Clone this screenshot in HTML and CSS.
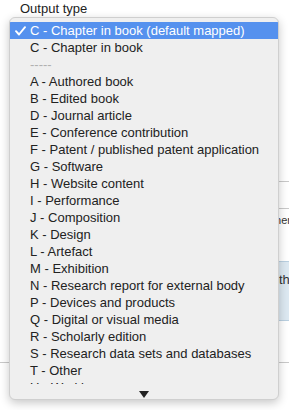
FILE: index.html
```html
<!DOCTYPE html>
<html>
<head>
<meta charset="utf-8">
<link rel="stylesheet" href="styles.css">
</head>
<body>
<div class="page">
  <div class="field-label">Output type</div>
  <div class="form">
    <div class="form-row first"></div>
    <div class="form-row second"></div>
    <div class="note-text">them</div>
    <div class="info-box"><span class="info-text">the</span></div>
    <div class="form-row last"></div>
  </div>

  <div class="menu">
    <ul class="options">
      <li class="option selected"><svg class="check" width="11" height="10" viewBox="0 0 11 10"><path d="M1 5.2 L4 8.5 L10 1.2" fill="none" stroke="#fff" stroke-width="1.9" stroke-linecap="round" stroke-linejoin="round"/></svg>C - Chapter in book (default mapped)</li>
      <li class="option">C - Chapter in book</li>
      <li class="option sep">-----</li>
      <li class="option">A - Authored book</li>
      <li class="option">B - Edited book</li>
      <li class="option">D - Journal article</li>
      <li class="option">E - Conference contribution</li>
      <li class="option">F - Patent / published patent application</li>
      <li class="option">G - Software</li>
      <li class="option">H - Website content</li>
      <li class="option">I - Performance</li>
      <li class="option">J - Composition</li>
      <li class="option">K - Design</li>
      <li class="option">L - Artefact</li>
      <li class="option">M - Exhibition</li>
      <li class="option">N - Research report for external body</li>
      <li class="option">P - Devices and products</li>
      <li class="option">Q - Digital or visual media</li>
      <li class="option">R - Scholarly edition</li>
      <li class="option">S - Research data sets and databases</li>
      <li class="option">T - Other</li>
      <li class="option">U - Working paper</li>
    </ul>
    <div class="scroll-arrow"><svg width="10" height="7" viewBox="0 0 10 7"><path d="M0 0 H10 L5 7 Z" fill="#222"/></svg></div>
  </div>
</div>
</body>
</html>
```
FILE: styles.css
```css
html, body {
  margin: 0;
  padding: 0;
  background: #fff;
}
body {
  width: 289px;
  height: 410px;
  overflow: hidden;
  font-family: "Liberation Sans", Arial, sans-serif;
  color: #222;
}
.page {
  position: relative;
  height: 410px;
  overflow: hidden;
}
.field-label {
  font-size: 13px;
  line-height: 16px;
  padding: 1px 0 0 20px;
  color: #222;
}
.form {
  display: flex;
  flex-direction: column;
}
.form-row.first {
  height: 164px;
  margin-left: 200px;
  border-bottom: 1px solid #c9c9c9;
}
.form-row.second {
  height: 26px;
  margin-left: 200px;
  border-bottom: 1px solid #c9c9c9;
}
.note-text {
  height: 14px;
  line-height: 14px;
  margin-top: 4px;
  white-space: nowrap;
  font-size: 11px;
  color: #333;
  padding-left: 272px;
}
.info-box {
  margin-top: 34px;
  margin-left: 200px;
  height: 58px;
  background: #dce8f1;
  border-top: 1px solid #b9cfe0;
  border-bottom: 1px solid #b9cfe0;
  white-space: nowrap;
  overflow: hidden;
}
.info-text {
  display: block;
  font-size: 13px;
  color: #333;
  padding: 10px 0 0 79px;
}
.form-row.last {
  margin-top: 41px;
  border-top: 1px solid #c9c9c9;
}
.menu {
  position: absolute;
  left: 9px;
  top: 17px;
  width: 268px;
  height: 381px;
  background: #efefef;
  border: 1px solid #cfcfcf;
  border-radius: 6px;
  box-shadow: 0 3px 10px rgba(0, 0, 0, 0.22);
  overflow: hidden;
  display: flex;
  flex-direction: column;
}
.options {
  list-style: none;
  margin: 0;
  padding: 4px 0 0 0;
  height: 362px;
  flex: none;
  overflow: hidden;
}
.option {
  height: 17px;
  line-height: 17px;
  font-size: 13px;
  padding-left: 20px;
  white-space: nowrap;
  color: #222;
  position: relative;
}
.option.selected {
  background: #5591ee;
  color: #fff;
}
.option.sep {
  color: #b0b0b0;
}
.check {
  position: absolute;
  left: 5px;
  top: 4px;
}
.scroll-arrow {
  display: flex;
  justify-content: center;
  padding-top: 7px;
}
```
